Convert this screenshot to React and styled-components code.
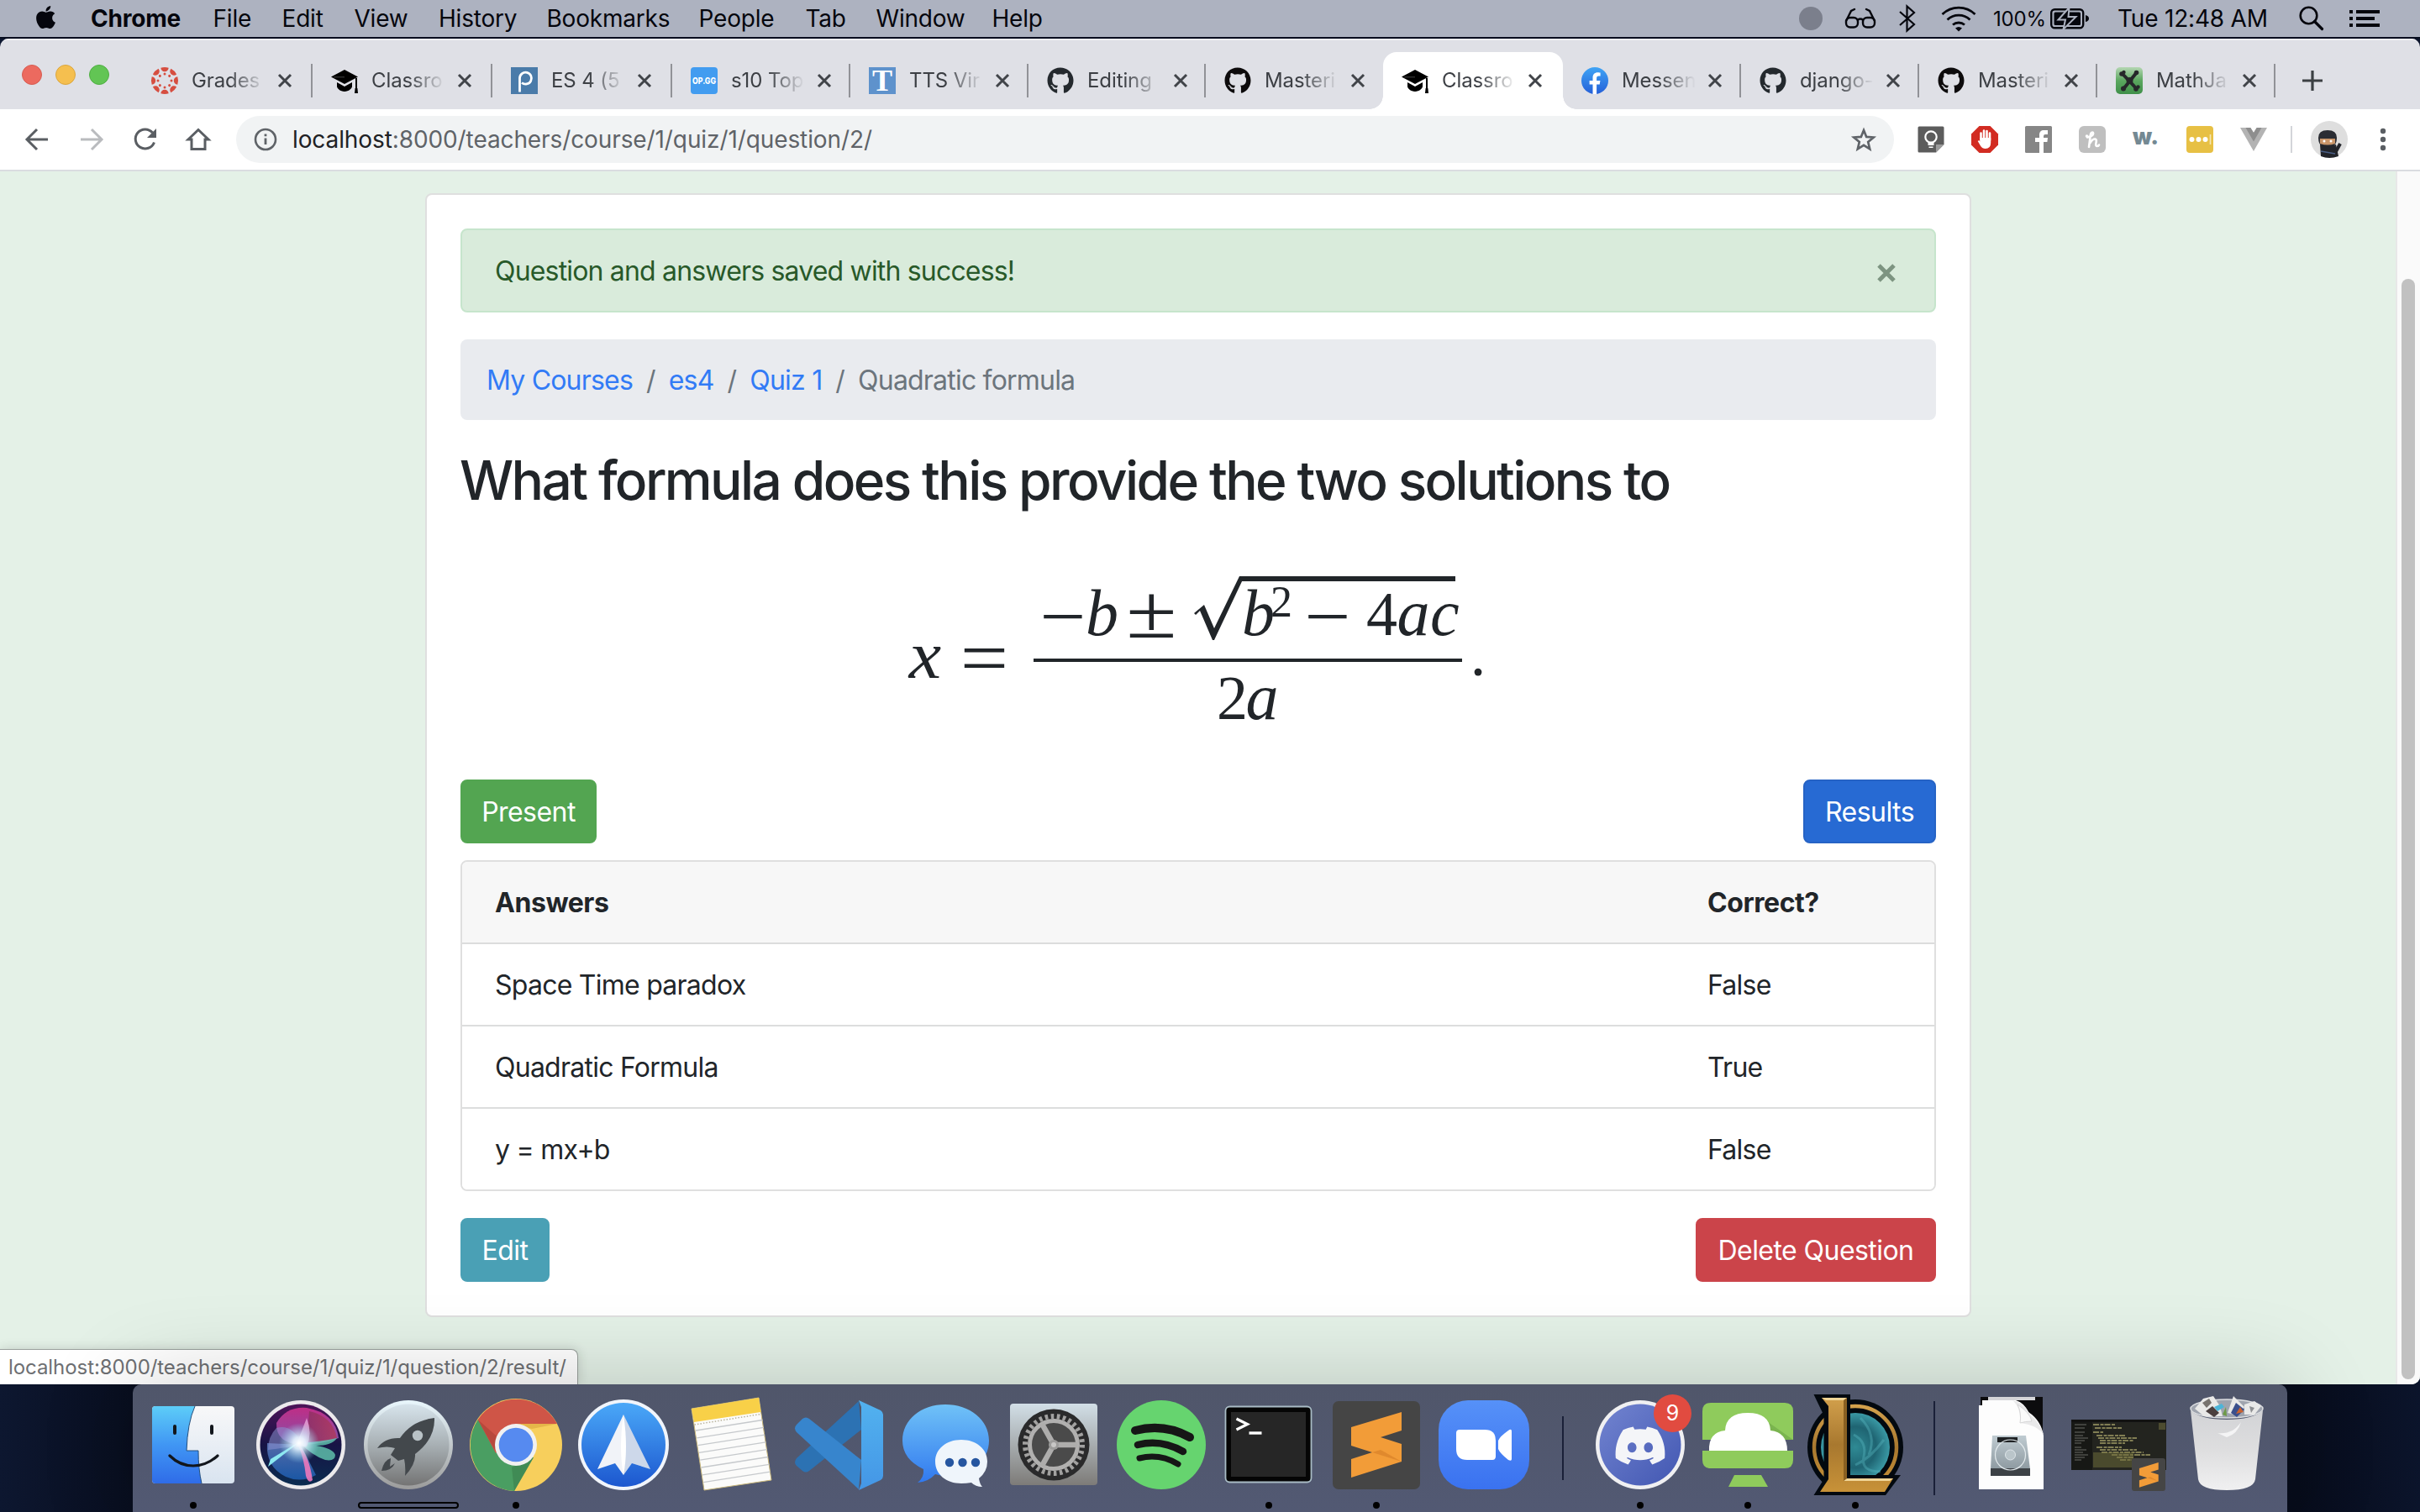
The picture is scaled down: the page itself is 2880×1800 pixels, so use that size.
import React from "react";
import styled, { createGlobalStyle, css } from "styled-components";
import { FaApple, FaGithub, FaDiscord } from "react-icons/fa";

const GlobalStyle = createGlobalStyle`
  *, *::before, *::after { box-sizing: border-box; }
  html, body { margin: 0; padding: 0; background: #0b1226; }
  body {
    width: 2880px;
    height: 1800px;
    overflow: hidden;
    font-family: Inter, "Liberation Sans", sans-serif;
    color: #212529;
  }
  svg { display: block; flex: none; overflow: visible; }
`;

const Desktop = styled.div`
  width: 2880px;
  height: 1800px;
  display: flex;
  flex-direction: column;
  background: linear-gradient(90deg, #0d1730 0%, #080d1d 6%, #0b1226 50%, #070c1b 95%, #0b142b 100%);
`;

/* ---------- menu bar ---------- */

const MenuBar = styled.header`
  height: 46px;
  flex: none;
  display: flex;
  align-items: center;
  justify-content: space-between;
  padding: 0 48px 0 39px;
  background: #adb2c0;
  border-bottom: 2px solid #060c1f;
  color: #05060d;
  font-size: 28px;
`;

const MenuGroup = styled.div`
  display: flex;
  align-items: center;
  height: 44px;
`;

const MenuItem = styled.span`
  width: ${(p) => p.$w}px;
  white-space: nowrap;
  letter-spacing: ${(p) => p.$ls || "-0.2px"};
  font-weight: ${(p) => (p.$bold ? 700 : 400)};
`;

const BatteryLabel = styled.span`
  width: 68px;
  font-size: 24px;
  letter-spacing: -0.2px;
`;

const Slot = styled.span`
  display: flex;
  align-items: center;
  width: ${(p) => p.$w}px;
  flex: none;
`;

const AppleSlot = styled(Slot)`
  font-size: 31px;
  padding-bottom: 4px;
`;

const RecordDot = styled.span`
  width: 28px;
  height: 28px;
  border-radius: 50%;
  background: #7b7f8c;
`;

/* ---------- browser window ---------- */

const Window = styled.div`
  height: 1602px;
  flex: none;
  display: flex;
  flex-direction: column;
  border-radius: 10px 10px 10px 0;
  overflow: hidden;
  background: #dfe0e6;
`;

const TabStrip = styled.nav`
  height: 84px;
  flex: none;
  display: flex;
  align-items: flex-end;
  padding-left: 26px;
  border-top: 2px solid #eeeef1;
`;

const Lights = styled.div`
  display: flex;
  gap: 16px;
  width: 132px;
  height: 68px;
  padding-top: 15px;
`;

const Light = styled.span`
  width: 24px;
  height: 24px;
  border-radius: 50%;
  background: ${(p) => p.$c};
  border: 1px solid ${(p) => p.$edge};
`;

const Tab = styled.div`
  width: ${(p) => p.$w}px;
  height: 68px;
  flex: none;
  display: flex;
  align-items: center;
  padding: 0 0 0 22px;
  position: relative;
  ${(p) =>
    p.$active &&
    css`
      background: #fff;
      border-radius: 16px 16px 0 0;
      &::before,
      &::after {
        content: "";
        position: absolute;
        bottom: 0;
        width: 16px;
        height: 16px;
      }
      &::before {
        left: -16px;
        background: radial-gradient(circle at 0 0, transparent 15.5px, #fff 16px);
      }
      &::after {
        right: -16px;
        background: radial-gradient(circle at 100% 0, transparent 15.5px, #fff 16px);
      }
    `}
`;

const TabTitle = styled.span`
  width: 88px;
  margin-left: 16px;
  overflow: hidden;
  white-space: nowrap;
  font-size: 24px;
  line-height: 32px;
  letter-spacing: -0.1px;
  color: #3c3f44;
  -webkit-mask-image: linear-gradient(90deg, #000 50%, transparent 100%);
  mask-image: linear-gradient(90deg, #000 50%, transparent 100%);
`;

const TabClose = styled.svg`
  margin-left: 14px;
`;

const TabRule = styled.span`
  width: 2px;
  height: 40px;
  margin-left: auto;
  background: ${(p) => (p.$hidden ? "transparent" : "#919297")};
`;

const NewTab = styled.div`
  height: 68px;
  display: flex;
  align-items: center;
  padding-left: 32px;
`;

const Toolbar = styled.div`
  height: 74px;
  flex: none;
  display: flex;
  align-items: center;
  background: #fff;
  border-bottom: 2px solid #dadce0;
  padding-left: 30px;
`;

const Omnibox = styled.div`
  width: 1973px;
  height: 56px;
  border-radius: 28px;
  background: #f1f3f4;
  display: flex;
  align-items: center;
  padding: 0 21px 0 21px;
`;

const Url = styled.span`
  flex: 1;
  margin-left: 18px;
  font-size: 28px;
  letter-spacing: -0.1px;
  color: #5f6368;
  white-space: nowrap;
  b {
    font-weight: 400;
    color: #202124;
  }
`;

const Extensions = styled.div`
  display: flex;
  align-items: center;
  gap: 32px;
  margin-left: 28px;
`;

const Extension = styled.span`
  width: 32px;
  height: 32px;
  display: flex;
  align-items: center;
  justify-content: center;
`;

const ToolbarRule = styled.span`
  width: 2px;
  height: 32px;
  margin: 0 22px 0 28px;
  background: #d3d5d9;
`;

const Viewport = styled.div`
  flex: 1;
  display: flex;
  position: relative;
  background: #e4f1e7;
`;

const Page = styled.main`
  flex: 1;
  padding: 26px 0 0 506px;
`;

const ScrollTrack = styled.div`
  width: 29px;
  background: #fafafa;
  border-left: 2px solid #e8e8e8;
  padding: 128px 6px 6px 5px;
`;

const ScrollThumb = styled.div`
  width: 16px;
  height: 1310px;
  border-radius: 8px;
  background: #c1c1c1;
`;

const StatusBubble = styled.div`
  position: absolute;
  left: 0;
  bottom: 0;
  width: 688px;
  height: 42px;
  padding-left: 10px;
  line-height: 42px;
  font-size: 24px;
  letter-spacing: -0.07px;
  color: #6e7073;
  white-space: nowrap;
  background: #fff;
  border: 1px solid #9aa19d;
  border-left: 0;
  border-bottom: 0;
  border-radius: 0 8px 0 0;
  box-shadow: 0 0 14px rgba(0, 0, 0, 0.16);
`;

/* ---------- page content ---------- */

const Card = styled.section`
  width: 1840px;
  height: 1338px;
  padding: 40px;
  background: #fff;
  border: 2px solid #dfdfdf;
  border-radius: 8px;
`;

const Alert = styled.div`
  height: 100px;
  display: flex;
  align-items: center;
  justify-content: space-between;
  padding: 0 46px 0 39px;
  margin-bottom: 32px;
  border: 2px solid #c6e5cc;
  border-radius: 8px;
  background: #d9ebdb;
  color: #285929;
  font-size: 32px;
  letter-spacing: -0.82px;
`;

const AlertClose = styled.svg`
  margin-top: 6px;
`;

const Breadcrumb = styled.nav`
  height: 96px;
  display: flex;
  align-items: center;
  padding: 0 31px;
  margin-bottom: 32px;
  border-radius: 8px;
  background: #e9ebef;
  color: #6c757d;
  font-size: 32px;
  letter-spacing: -0.8px;
`;

const Crumb = styled.span`
  color: ${(p) => (p.$link ? "#327bf6" : "#6c757d")};
  &:not(:first-child)::before {
    content: "/";
    color: #6c757d;
    padding: 0 16px;
  }
`;

const Heading = styled.h1`
  margin: 0;
  height: 77px;
  font-size: 64px;
  line-height: 79px;
  font-weight: 500;
  letter-spacing: -2.6px;
  word-spacing: 0;
  text-indent: -1px;
  white-space: nowrap;
`;

const ButtonRow = styled.div`
  display: flex;
  justify-content: space-between;
  margin-bottom: ${(p) => p.$gap || 0}px;
`;

const Button = styled.button`
  width: ${(p) => p.$w}px;
  height: 76px;
  padding: 0;
  border: 2px solid ${(p) => p.$edge || p.$c};
  border-radius: 8px;
  background: ${(p) => p.$c};
  color: #fff;
  font-family: inherit;
  font-size: 32px;
  letter-spacing: -0.55px;
`;

const AnswerTable = styled.div`
  margin-bottom: 32px;
  border: 2px solid #dfdfdf;
  border-radius: 8px;
  overflow: hidden;
`;

const AnswerRow = styled.div`
  height: ${(p) => (p.$last ? 96 : 98)}px;
  display: grid;
  grid-template-columns: 1443px 1fr;
  align-items: center;
  padding: 0 39px;
  font-size: 32px;
  letter-spacing: ${(p) => (p.$head ? "-0.45px" : "-0.75px")};
  font-weight: ${(p) => (p.$head ? 700 : 400)};
  background: ${(p) => (p.$head ? "#f7f7f7" : "#fff")};
  border-bottom: ${(p) => (p.$last ? "0" : "2px solid #dcdddd")};
`;

/* ---------- formula ---------- */

const Formula = styled.div`
  height: 319px;
  padding: 75px 0 0 535px;
  display: flex;
  align-items: flex-start;
  font-family: "Liberation Serif", "Times New Roman", serif;
  font-size: 74px;
`;

const MathLine = styled.span`
  display: block;
  white-space: nowrap;
  line-height: ${(p) => p.$lh}px;
  ${(p) => p.$ml && `margin-left: ${p.$ml}px;`}
`;

const Glyph = styled.span`
  display: inline-block;
  width: ${(p) => p.$w}px;
  line-height: 0;
  text-align: center;
  font-size: ${(p) => p.$size || 74}px;
  font-style: ${(p) => (p.$it ? "italic" : "normal")};
  vertical-align: ${(p) => p.$raise || 0}px;
  ${(p) => p.$stretch && `transform: scaleX(${p.$stretch});`}
`;

const Fraction = styled.span`
  display: flex;
  flex-direction: column;
  width: 510px;
  margin-left: 25px;
`;

const Numerator = styled.span`
  height: 104px;
  display: flex;
  align-items: flex-start;
  padding-left: 8px;
  border-bottom: 4px solid #212529;
`;

const Radicand = styled.span`
  width: 254px;
  margin-top: 2px;
  border-top: 6px solid #212529;
`;

const Denominator = styled.span`
  padding-left: 218px;
`;

/* ---------- dock ---------- */

const DockArea = styled.footer`
  flex: 1;
  padding-left: 158px;
  display: flex;
`;

const Dock = styled.div`
  width: 2564px;
  height: 152px;
  padding-left: 8px;
  display: flex;
  position: relative;
  border-radius: 10px 10px 0 0;
  background: linear-gradient(180deg, #50566a 0%, #525973 100%);
  box-shadow: 0 0 110px rgba(0, 0, 0, 0.2);
`;

const DockCell = styled.div`
  width: 128px;
  height: 152px;
  position: relative;
  ${(p) =>
    p.$running &&
    css`
      &::after {
        content: "";
        position: absolute;
        left: 60px;
        bottom: 4px;
        width: 8px;
        height: 8px;
        border-radius: 50%;
        background: #000;
      }
    `}
  ${(p) =>
    p.$launching &&
    css`
      &::after {
        content: "";
        position: absolute;
        left: 4px;
        bottom: 4px;
        width: 120px;
        height: 8px;
        border-radius: 4px;
        border: 2px solid #000;
      }
    `}
`;

const DockRule = styled.div`
  width: ${(p) => p.$w}px;
  display: flex;
  justify-content: center;
  padding-top: ${(p) => p.$top}px;
  &::before {
    content: "";
    width: 2px;
    height: ${(p) => p.$h}px;
    margin-left: 2px;
    background: #1a2038;
  }
`;

const Badge = styled.span`
  position: absolute;
  left: 80px;
  top: 12px;
  width: 45px;
  height: 45px;
  border-radius: 50%;
  background: #e14b40;
  color: #fff;
  font-size: 25px;
  line-height: 45px;
  text-align: center;
`;

const DiscordGlyph = styled(FaDiscord)`
  position: absolute;
  left: 32px;
  top: 41px;
  color: #f4f5f8;
`;

/* ---------- small drawings ---------- */

const Cap = () => (
  <svg width="32" height="32" viewBox="0 0 32 32">
    <path d="M16 3 32 11.5 16 20 0 11.5z" fill="#000" />
    <path d="M7 18v5c0 2 4 6 9 6s9-4 9-6v-5l-9 5z" fill="#000" />
    <path d="M30 13v13" stroke="#000" strokeWidth="2" />
    <path d="M28.6 25h2.8l.6 6h-4z" fill="#000" />
    <path d="m3 11.8 13 0" stroke="#555" strokeWidth=".8" />
  </svg>
);

const CanvasIcon = () => (
  <svg width="32" height="32" viewBox="0 0 32 32" fill="#d64e40">
    {[0, 45, 90, 135, 180, 225, 270, 315].map((a) => (
      <g key={a} transform={`rotate(${a} 16 16)`}>
        <path d="M11.300 .7a16 16 0 0 1 9.400 0c-.2 2.700-2.200 4.500-4.700 4.500s-4.500-1.800-4.700-4.500z" />
        <circle cx="16" cy="8" r="1.500" />
      </g>
    ))}
  </svg>
);

const PiazzaIcon = () => (
  <svg width="32" height="32" viewBox="0 0 32 32">
    <rect width="32" height="32" fill="#4a7ba9" />
    <path d="M10.500 29.500V13a7 7 0 1 1 2.500 5.500" fill="none" stroke="#fff" strokeWidth="2.800" />
  </svg>
);

const OpggIcon = () => (
  <svg width="32" height="32" viewBox="0 0 32 32">
    <rect width="32" height="32" rx="4" fill="#429cf0" />
    <text x="2" y="19.500" fontSize="10" fontWeight="800" textLength="28" lengthAdjust="spacingAndGlyphs" fill="#fff" fontFamily="Inter, sans-serif">
      OP.GG
    </text>
  </svg>
);

const TIcon = () => (
  <svg width="32" height="32" viewBox="0 0 32 32">
    <rect width="32" height="32" fill="#5e92cc" />
    <text x="16" y="28" textAnchor="middle" fontSize="36" fontWeight="700" fill="#fff" fontFamily="Liberation Serif, serif">
      T
    </text>
  </svg>
);

const FacebookIcon = () => (
  <svg width="32" height="32" viewBox="0 0 32 32">
    <defs>
      <linearGradient id="fb" x1="0" y1="0" x2="0" y2="1">
        <stop offset="0" stopColor="#3fa4f5" />
        <stop offset="1" stopColor="#2560d8" />
      </linearGradient>
    </defs>
    <circle cx="16" cy="16" r="16" fill="url(#fb)" />
    <path d="M13.500 32V20.600H9.600V16h3.900v-3.500c0-4 2.300-6.200 5.900-6.200 1.700 0 3.200.3 3.200.3v3.900h-2c-2 0-2.500 1.200-2.500 2.500v3h4.300l-.7 4.600h-3.600V32z" fill="#fff" />
  </svg>
);

const MathJaxIcon = () => (
  <svg width="32" height="32" viewBox="0 0 32 32">
    <defs>
      <linearGradient id="mj" x1="0" y1="0" x2="0" y2="1">
        <stop offset="0" stopColor="#b4d6b2" />
        <stop offset=".5" stopColor="#5ba75f" />
        <stop offset="1" stopColor="#3f8f49" />
      </linearGradient>
    </defs>
    <rect width="32" height="32" rx="5" fill="url(#mj)" />
    <path d="M8 8 24 25M25 6 9 26" stroke="#26282a" strokeWidth="4" strokeLinecap="round" />
    <g fill="#26282a">
      <circle cx="7" cy="8" r="2.800" />
      <circle cx="9.500" cy="6" r="2.200" />
      <circle cx="24.500" cy="6.500" r="2.800" />
      <circle cx="24" cy="26" r="2.800" />
      <circle cx="26.500" cy="23.500" r="2.200" />
      <circle cx="9" cy="25.500" r="3" />
      <circle cx="16.500" cy="16" r="4" />
    </g>
  </svg>
);

const Cross = () => (
  <TabClose width="18" height="18" viewBox="0 0 18 18">
    <path d="m2 2 14 14M16 2 2 16" stroke="#414449" strokeWidth="3" />
  </TabClose>
);

const GlassesIcon = () => (
  <svg width="38" height="26" viewBox="0 0 38 26" fill="none" stroke="#05060d" strokeWidth="2.400">
    <rect x="2" y="12" width="14" height="11.500" rx="5" />
    <rect x="22" y="12" width="14" height="11.500" rx="5" />
    <path d="M16 14.500q3-2 6 0M2.500 15 8 4l4-2M35.500 15 30 4l-4-2" strokeLinecap="round" />
  </svg>
);

const BluetoothIcon = () => (
  <svg width="20" height="34" viewBox="0 0 20 34" fill="none" stroke="#05060d" strokeWidth="2.200">
    <path d="m1 9 17 15-8.500 7.500V2.500L18 10 1 25" />
  </svg>
);

const WifiIcon = () => (
  <svg width="42" height="32" viewBox="0 0 42 32" fill="none" stroke="#05060d" strokeWidth="2.800">
    <path d="M1.500 11a28 28 0 0 1 39 0M7.500 17.500a19.500 19.500 0 0 1 27 0M14 23.500a11 11 0 0 1 14 0" />
    <path d="M17 27.500q4-3 8 0l-4 4z" fill="#05060d" stroke="none" />
  </svg>
);

const BatteryIcon = () => (
  <svg width="46" height="26" viewBox="0 0 46 26">
    <rect x="1.200" y="2.200" width="38" height="22" rx="4" fill="none" stroke="#05060d" strokeWidth="2.400" />
    <rect x="4.500" y="5.500" width="31.500" height="15.500" rx="1.500" fill="#05060d" />
    <path d="M42 9v8q4-1 4-4t-4-4z" fill="#05060d" />
    <path d="M22.500 0 9.500 14.500h8.500L15.500 26l15-15h-9z" fill="#05060d" stroke="#adb2c0" strokeWidth="2" />
  </svg>
);

const SpotlightIcon = () => (
  <svg width="30" height="30" viewBox="0 0 30 30" fill="none" stroke="#05060d">
    <circle cx="11.500" cy="11.500" r="9.800" strokeWidth="2.600" />
    <path d="m18.500 18.500 9 9" strokeWidth="3.200" strokeLinecap="round" />
  </svg>
);

const ListIcon = () => (
  <svg width="36" height="22" viewBox="0 0 36 22" fill="#05060d">
    <path d="M0 1h4v4H0zM8 1h28v4H8zM0 9h4v4H0zM8 9h22v4H8zM0 17h4v4H0zM8 17h28v4H8z" />
  </svg>
);

const BackIcon = ({ color = "#5a5e63", flip }) => (
  <svg width="28" height="28" viewBox="0 0 28 28" fill="none" stroke={color} strokeWidth="3">
    <path d={flip ? "M1 14h24M14 2l12 12-12 12" : "M27 14H3M14 2 2 14l12 12"} />
  </svg>
);

const ReloadIcon = () => (
  <svg width="28" height="28" viewBox="0 0 28 28">
    <path d="M24.500 17.500A11.500 11.500 0 1 1 22.500 6" fill="none" stroke="#5a5e63" strokeWidth="3" />
    <path d="M27 1v11H16z" fill="#5a5e63" />
  </svg>
);

const HomeIcon = () => (
  <svg width="28" height="28" viewBox="0 0 28 28" fill="none" stroke="#5a5e63" strokeWidth="3">
    <path d="M2 14 14 2.500 26 14h-4v11.500H6V14z" strokeLinejoin="miter" />
  </svg>
);

const InfoIcon = () => (
  <svg width="28" height="28" viewBox="0 0 28 28" fill="none" stroke="#5f6368" strokeWidth="2.600">
    <circle cx="14" cy="14" r="12" />
    <path d="M14 12.500V20M14 7.500v2.800" strokeWidth="2.800" />
  </svg>
);

const StarIcon = () => (
  <svg width="30" height="30" viewBox="0 0 30 30" fill="none" stroke="#5f6368" strokeWidth="2.700">
    <path d="m15 4 3.200 7.900 8.500.6-6.500 5.500 2 8.300-7.200-4.500-7.200 4.500 2-8.300-6.500-5.500 8.500-.6z" />
  </svg>
);

const KeepIcon = () => (
  <svg width="32" height="32" viewBox="0 0 32 32">
    <path d="M2 .5h28q1.500 0 1.500 1.500v20L22 31.500H2Q.5 31.500.5 30V2Q.5.5 2 .5z" fill="#5c5c5c" />
    <path d="M31.500 22H22v9.500z" fill="#9c9c9c" />
    <circle cx="16" cy="13" r="6.700" fill="none" stroke="#fff" strokeWidth="2.200" />
    <path d="M12.500 19h7v4h-7zM13.500 24.500h5V26h-5z" fill="#fff" />
  </svg>
);

const BlockIcon = () => (
  <svg width="32" height="32" viewBox="0 0 32 32">
    <path d="M9.500 0h13L32 9.500v13L22.500 32h-13L0 22.500v-13z" fill="#d22c22" />
    <path d="M11.500 17V8.500M15 16V5.500M18.500 16V6M22 17V8.500" stroke="#fff" strokeWidth="2.600" strokeLinecap="round" />
    <path d="M10.200 14h13v6q0 7-6.500 7-3.500 0-5.500-3l-3.500-6q1.500-1.500 3 .5z" fill="#fff" />
  </svg>
);

const GreyFacebook = () => (
  <svg width="32" height="32" viewBox="0 0 32 32">
    <rect width="32" height="32" rx="1.500" fill="#868686" />
    <path d="M17 32V19h-5v-5h5v-3.500C17 7 19 5 22.500 5H27v5h-3q-2 0-2 2v2h5l-.6 5H22v13z" fill="#fff" />
  </svg>
);

const HoneyIcon = () => (
  <svg width="32" height="32" viewBox="0 0 32 32">
    <rect width="32" height="32" rx="6" fill="#bfbfbf" />
    <path d="M10 13.500q6-1 7-4 .4-2-1-2t-2 2L12 25M13.500 20q3-5 6-4.500 2 .5 1 4.500t1.500 4q1.500 0 2-1.500" fill="none" stroke="#fff" strokeWidth="2.600" strokeLinecap="round" />
    <circle cx="9.500" cy="12" r="1.800" fill="#fff" />
  </svg>
);

const WikiIcon = () => (
  <svg width="32" height="32" viewBox="0 0 32 32">
    <text x="0" y="22" fontSize="27" fontWeight="900" textLength="31" lengthAdjust="spacingAndGlyphs" fill="#748993" fontFamily="Inter, sans-serif">
      w.
    </text>
  </svg>
);

const PasswordIcon = () => (
  <svg width="32" height="32" viewBox="0 0 32 32">
    <rect width="32" height="32" rx="4" fill="#e7c044" />
    <circle cx="6.500" cy="16" r="3" fill="#fff" />
    <circle cx="14.500" cy="16" r="3" fill="#fff" />
    <circle cx="22.500" cy="16" r="3" fill="#fff" />
    <path d="M28.500 10v12" stroke="#f6e6b4" strokeWidth="1.600" />
  </svg>
);

const VueIcon = () => (
  <svg width="32" height="32" viewBox="0 0 32 32">
    <path d="M0 2h12.300L16 8l3.700-6H32L16 30z" fill="#b3b3b3" />
    <path d="M6.500 2h5.800L16 8l3.700-6h5.800L16 18.500z" fill="#8e8e8e" />
  </svg>
);

const NinjaAvatar = () => (
  <svg width="44" height="44" viewBox="0 0 44 44">
    <circle cx="22" cy="22" r="22" fill="#dedede" />
    <path d="M9 20q0-9 11-9t11 9q0 8-5 10H14q-5-2-5-10z" fill="#2b2d33" />
    <path d="M11 21h18v6q-9 3-18 0z" fill="#c99569" />
    <circle cx="16" cy="24" r="1.500" fill="#fff" />
    <circle cx="24" cy="24" r="1.500" fill="#fff" />
    <path d="M11 28q10 3 19 0l3 14q-11 4-21 0z" fill="#22242a" />
    <path d="m28 40 7-13" stroke="#22242a" strokeWidth="4" />
    <path d="m12 36 17 3" stroke="#4a5f86" strokeWidth="1.600" />
  </svg>
);

const DotsIcon = () => (
  <svg width="8" height="28" viewBox="0 0 8 28" fill="#5a5e63">
    <circle cx="4" cy="4" r="3.200" />
    <circle cx="4" cy="14" r="3.200" />
    <circle cx="4" cy="24" r="3.200" />
  </svg>
);

/* ---------- dock drawings ---------- */

const Art = ({ children }) => (
  <svg width="128" height="152" viewBox="0 0 128 152">
    {children}
  </svg>
);

const Grad = ({ id, from, to, mid, x2 = 0, y2 = 1 }) => (
  <linearGradient id={id} x1="0" y1="0" x2={x2} y2={y2}>
    <stop offset="0" stopColor={from} />
    {mid && <stop offset=".5" stopColor={mid} />}
    <stop offset="1" stopColor={to} />
  </linearGradient>
);

const Finder = () => (
  <Art>
    <Grad id="fi1" from="#5dcdf8" mid="#4096f4" to="#2f6ce8" />
    <Grad id="fi2" from="#f8f8f9" to="#d9e4f0" />
    <rect x="15" y="26" width="98" height="92" rx="4" fill="url(#fi2)" />
    <path d="M19 26h47q-9 20-10 53h14q0 22 4 39H19q-4 0-4-4V30q0-4 4-4z" fill="url(#fi1)" />
    <path d="M66 26q-9 20-10 53h14q0 22 4 39" fill="none" stroke="#24507e" strokeWidth="1" />
    <path d="M42 50v8M86 50v8" stroke="#12161c" strokeWidth="4" strokeLinecap="round" />
    <path d="M36 85q12 12 28 12t29-12" fill="none" stroke="#12161c" strokeWidth="3.200" strokeLinecap="round" />
  </Art>
);

const Siri = () => (
  <Art>
    <defs>
      <Grad id="si0" from="#4d1458" mid="#171445" to="#0b2c50" />
      <radialGradient id="si1">
        <stop offset="0" stopColor="#fff" />
        <stop offset=".3" stopColor="#e6f6ff" stopOpacity=".9" />
        <stop offset="1" stopColor="#8fd8f0" stopOpacity="0" />
      </radialGradient>
      <Grad id="si2" from="#c9308a" to="#8a58b4" />
      <Grad id="si3" from="#5a74b4" to="#1c5cae" />
      <Grad id="si4" from="#8a2f62" to="#b03a58" x2={1} y2={0} />
    </defs>
    <circle cx="64" cy="72" r="53" fill="#eceaec" />
    <circle cx="64" cy="72" r="48.500" fill="url(#si0)" />
    <path d="M24 70q-2 28 22 40 18 8 36-2L64 72z" fill="url(#si3)" opacity=".9" />
    <path d="M35 46q12-20 36-18 34 6 38 36-22 8-45 8-30-2-29-26z" fill="url(#si2)" opacity=".92" />
    <path d="M74 32q28 6 33 32-20 6-36 4z" fill="url(#si4)" opacity=".8" />
    <path d="M35 52q18-6 32 20-26 4-42 6 0-16 10-26z" fill="#8b8fd0" opacity=".55" />
    <path d="M64 70q24-2 43-6-6 9-25 9 20 3 23 11 0 8-12 6Q76 84 64 70z" fill="#63c8b0" opacity=".8" />
    <path d="M62 72q12 14 16 42-5 5-8-5-2-20-9-36z" fill="#ee78bb" opacity=".9" />
    <path d="M66 66 25 98l3-9z" fill="#8ff0f4" opacity=".95" />
    <path d="m58 74 13-34q7 18 0 34z" fill="#e9a8d8" opacity=".8" />
    <circle cx="62" cy="70" r="24" fill="url(#si1)" />
  </Art>
);

const Launchpad = () => (
  <Art>
    <Grad id="la1" from="#d7e4ec" mid="#a8b0b4" to="#747474" />
    <Grad id="la2" from="#e9f7fd" to="#9b9b9b" />
    <circle cx="64" cy="72" r="53" fill="url(#la2)" />
    <circle cx="64" cy="72" r="48.500" fill="url(#la1)" />
    <path d="M95 40q1 25-23 43 1 12-12 26 1-11-1-20l-7 2-9-7 5-8q-9-3-21 0 9-13 27-12 14-21 41-24z" fill="#43484c" />
    <path d="M43 88q-8 2-11 15 12 0 16-9l-6 4z" fill="#43484c" />
    <circle cx="75" cy="61" r="6.200" fill="#b9c2c6" />
  </Art>
);

const Chrome = () => (
  <Art>
    <circle cx="64" cy="72" r="55" fill="#f7cf5c" />
    <path d="M18.700 42A55 55 0 0 0 62 127l23-40-30-5z" fill="#4a9e62" />
    <path d="M18.700 42A55 55 0 0 1 113 47H64L40 82z" fill="#cf5547" />
    <path d="m18.700 42 20 36 6-13z" fill="#a93f35" opacity=".6" />
    <path d="M64 47h49l-30 6z" fill="#d9a53c" opacity=".6" />
    <path d="m85 87-23 40-3-28z" fill="#3a7f4d" opacity=".6" />
    <circle cx="64" cy="72" r="25" fill="#f1f1f1" />
    <circle cx="64" cy="72" r="20.300" fill="#568af0" />
  </Art>
);

const Spark = () => (
  <Art>
    <Grad id="sp1" from="#4aa8f8" to="#1c57cf" />
    <circle cx="64" cy="72" r="54" fill="#f1f5fb" />
    <circle cx="64" cy="72" r="50" fill="url(#sp1)" />
    <path d="M64 36 33 101l21-7 10 14z" fill="#f1f3f8" />
    <path d="m64 36 32 65-22-7-10 14z" fill="#cdd8ea" />
    <path d="M64 36q-6 40 0 72 6-32 0-72z" fill="#fff" />
  </Art>
);

const Notes = () => (
  <Art>
    <path d="m17 29 80-13 15 98-80 12z" fill="#fbfbfa" stroke="#c9b77a" strokeWidth="1" />
    <path d="m17 29 80-13 2.500 17L20 45z" fill="#f8d048" />
    <path d="m20.500 48 79-12.500" stroke="#b9b39d" strokeWidth="1.500" strokeDasharray="1.500 2" />
    <g stroke="#c6c9cc" strokeWidth="1.300">
      {[0, 1, 2, 3, 4, 5, 6, 7].map((i) => (
        <path key={i} d={`M${22 + i * 1.3} ${55 + i * 8.8}l79.500-12.500`} />
      ))}
    </g>
  </Art>
);

const VSCode = () => (
  <Art>
    <Grad id="vs1" from="#52b2ef" to="#4496e6" />
    <path d="M88 20 14 88q-4 5 0 9l7 6q4 3 8 0l62-49z" fill="#2c72b3" />
    <path d="M88 125 14 57q-4-5 0-9l7-7q4-3 8 0l62 49z" fill="#3785cd" />
    <path d="m88 19 26 12q3 2 3 5v73q0 3-3 5l-26 12 3-8V27z" fill="url(#vs1)" />
  </Art>
);

const Messages = () => (
  <Art>
    <Grad id="me1" from="#70c2f7" to="#3179ef" />
    <path d="M63 24c29 0 52 18 52 43s-23 43-50 42q-8 0-14-2-8 9-21 10 8-6 7-16-25-12-25-34c0-25 22-43 51-43z" fill="url(#me1)" />
    <path d="M82 66c18 0 31 11 31 26q0 12-10 20 1 7 4 10-8 0-13-5-6 1-12 1c-18 0-31-11-31-26s13-26 31-26z" fill="#eff5fb" />
    <circle cx="68" cy="93" r="5.200" fill="#2656a0" />
    <circle cx="83.500" cy="93" r="5.200" fill="#2656a0" />
    <circle cx="99" cy="93" r="5.200" fill="#2656a0" />
  </Art>
);

const Settings = () => (
  <Art>
    <Grad id="se1" from="#d2dfe7" to="#7d7b78" />
    <rect x="12" y="23" width="104" height="97" rx="4" fill="url(#se1)" />
    <circle cx="64" cy="72" r="42.500" fill="#2a2a2b" />
    <circle cx="64" cy="72" r="34" fill="none" stroke="#a2a1a0" strokeWidth="6" strokeDasharray="3.600 3.520" />
    <circle cx="64" cy="72" r="28.500" fill="#4a4a4a" stroke="#b1b0af" strokeWidth="5" />
    <path d="M64 72h28M64 72 50 47M64 72 50 97" stroke="#aeadac" strokeWidth="6.500" />
    <circle cx="64" cy="72" r="6" fill="#9c9b9a" />
    <circle cx="64" cy="72" r="3" fill="#c8c7c6" />
  </Art>
);

const Spotify = () => (
  <Art>
    <circle cx="64" cy="72" r="53" fill="#66d46f" />
    <g fill="none" stroke="#161616" strokeLinecap="round">
      <path d="M33 55q34-9 65 8" strokeWidth="10" />
      <path d="M36 72q28-7 54 8" strokeWidth="8.500" />
      <path d="M38 88q24-6 46 7" strokeWidth="7" />
    </g>
  </Art>
);

const Terminal = () => (
  <Art>
    <rect x="12.500" y="26.500" width="102" height="90" rx="5" fill="#050505" stroke="#a9bcc5" strokeWidth="1.800" />
    <rect x="19" y="33" width="89" height="77" fill="#262626" />
    <path d="m25.500 41 13 6.500-13 6.500" fill="none" stroke="#fff" strokeWidth="3.200" />
    <path d="M40.500 58h15" stroke="#fff" strokeWidth="3.400" />
  </Art>
);

const SublimeS = () => (
  <>
    <path d="m34 51 60-18v22L69 63l25 8v21l-60 19V89l25-8-25-8z" fill="#f29c38" />
    <path d="m59 81 10-3 25 14z" fill="#d9822a" opacity=".7" />
  </>
);

const Sublime = () => (
  <Art>
    <rect x="12" y="20" width="104" height="105" rx="7" fill="#454545" />
    <SublimeS />
  </Art>
);

const Zoom = () => (
  <Art>
    <Grad id="zo1" from="#5691f8" to="#3a72f0" />
    <rect x="10" y="19" width="108" height="106" rx="35" fill="url(#zo1)" />
    <path d="M35 54h30q13 0 13 13v19q0 4-4 4H44q-13 0-13-13V58q0-4 4-4z" fill="#fff" />
    <path d="M81 67q2-5 12-12 4-3 4 1v33q0 3-4 1-10-8-12-13z" fill="#fff" />
  </Art>
);

const Discord = () => (
  <Art>
    <Grad id="di1" from="#7284d0" to="#4257b2" x2={1} />
    <circle cx="64" cy="72" r="53" fill="#f0f0f2" />
    <circle cx="64" cy="72" r="48.500" fill="url(#di1)" />
  </Art>
);

const CloudDesk = () => (
  <Art>
    <path d="M20 22h88q10 0 10 10v34H10V32q0-10 10-10z" fill="#8fcb5c" />
    <path d="m84 42 34 24H86z" fill="#6da546" opacity=".6" />
    <path d="M10 79h108v11q0 10-10 10H20q-10 0-10-10z" fill="#8fcb5c" />
    <path d="M18 79q-1-22 19-24 1-21 27-21t27 21q20 2 20 24z" fill="#fff" />
    <path d="M48 108h32l8 14H41z" fill="#8fcb5c" />
  </Art>
);

const League = () => (
  <Art>
    <defs>
      <Grad id="le1" from="#d2a04c" mid="#a8782f" to="#c89238" />
      <radialGradient id="le2">
        <stop offset="0" stopColor="#2f8a94" />
        <stop offset=".6" stopColor="#1f6472" />
        <stop offset="1" stopColor="#3a99a5" />
      </radialGradient>
    </defs>
    <circle cx="64" cy="75" r="57" fill="#03090f" />
    <circle cx="64" cy="75" r="49" fill="none" stroke="url(#le1)" strokeWidth="4.500" />
    <circle cx="64" cy="75" r="41" fill="url(#le2)" />
    <path d="M62 60q16 8 12 26t20 18M70 40q20 20 10 44M64 96q18-8 34-30" fill="none" stroke="#5fc0c8" strokeWidth="3" opacity=".35" />
    <path d="M14.500 12H58v96h60l-18 24H14.500l12-19V37z" fill="#03090f" />
    <path d="M24 16h30v96h55l-10 16H22l10-15V26z" fill="url(#le1)" />
    <path d="M24 16h30l-3 3H29zM54 112h55l-4 3H50z" fill="#f0d596" />
    <path d="M54 16v96l-4 3V19z" fill="#8a6022" />
  </Art>
);

const DiskImage = () => (
  <Art>
    <Grad id="dk1" from="#bfcbd1" to="#8e9aa1" />
    <rect x="28" y="15" width="74" height="50" fill="#0c0c0e" />
    <rect x="37" y="15" width="56" height="4" fill="#d5d5d8" />
    <path d="M26 25h4v-6h40q10 3 15 14 15 10 18 28v64H26z" fill="#fdfdfd" />
    <path d="M66 19q10 8 9 27 20 2 28 14-4-14-16-24-6-13-21-17z" fill="#e9e9ea" />
    <path d="M72 24q5 10 3 22 6-2 14-2-2-10-17-20z" fill="#fafafa" stroke="#cfcfd1" strokeWidth=".8" />
    <path d="m42 61h40l5 40H40z" fill="url(#dk1)" />
    <rect x="40" y="100" width="47" height="9" fill="#3d4246" />
    <rect x="48" y="63" width="24" height="6" fill="#1f2224" />
    <circle cx="63.500" cy="84" r="18" fill="none" stroke="#e2e9ec" strokeWidth="1.200" />
    <circle cx="63.500" cy="84" r="6" fill="#bac5ca" stroke="#dfe6ea" />
  </Art>
);

const codeLines = [
  [34, 48, 26], [36, 52, 32], [34, 57, 12], [38, 61, 34], [40, 64, 46], [42, 67, 40], [42, 70, 30],
  [38, 75, 30], [42, 78, 44], [44, 81, 50], [56, 84, 46], [62, 87, 20], [66, 90, 14],
];

const EditorShot = () => (
  <Art>
    <rect x="8" y="42" width="113" height="60" fill="#23241f" />
    <rect x="8" y="42" width="113" height="3" fill="#111" />
    <rect x="8" y="45" width="25" height="57" fill="#171815" />
    {codeLines.map(([x, y, w]) => (
      <path key={y} d={`M${x} ${y}h${w}`} stroke="#a09a66" strokeWidth="1.300" strokeDasharray="7 1.500 4 1" />
    ))}
    {codeLines.map(([, y]) => (
      <path key={y} d={`M12 ${y}h${8 + (y % 5) * 2}`} stroke="#6a6b66" strokeWidth="1" />
    ))}
    <rect x="34" y="81" width="48" height="18" fill="#6b6a38" opacity=".55" />
    <rect x="112" y="46" width="8" height="8" fill="#4d4c30" />
    <rect x="80" y="88" width="40" height="39" rx="3" fill="#454545" />
    <g transform="translate(76 80.500) scale(.38)">
      <SublimeS />
    </g>
  </Art>
);

const Trash = () => (
  <Art>
    <Grad id="tr1" from="#d2d3d6" mid="#dededf" to="#f0f0f1" />
    <ellipse cx="65" cy="29" rx="43" ry="11" fill="#9fa4ae" stroke="#dcdee1" strokeWidth="1.500" />
    <path d="m27 29 10-12 12-3 8 12 3 12H38zM66 34l7-20 13 13-8 10zM86 24l12-4 8 6-8 10H86z" fill="#e9e9e8" />
    <path d="m36 22 8-5 3 5-6 6z" fill="#77736f" />
    <path d="m40 32 8-6 8 8-6 5z" fill="#4a3f3f" />
    <path d="m50 27 9-4 3 4-8 5z" fill="#4cb5d9" />
    <path d="m70 34 6-12 10 8-9 9z" fill="#3a4f8c" />
    <path d="m76 35 5-8 4 6z" fill="#c9622f" />
    <path d="m60 36 4-9 1 11z" fill="#6e9a48" />
    <path d="m92 26 6 2-4 6z" fill="#8d8f92" />
    <path d="M22 31q12 11 43 11t43-11l-9 82q-2 13-34 13t-34-13z" fill="url(#tr1)" />
    <path d="M54 58q18 2 28-13-4 14-17 18z" fill="#f4f4f5" />
  </Art>
);

/* ---------- data ---------- */

const menus = [
  ["File", 82], ["Edit", 86], ["View", 100.5], ["History", 128.5], ["Bookmarks", 181],
  ["People", 127], ["Tab", 84], ["Window", 138], ["Help", 70],
];

const Octo = ({ color = "#24292e" }) => <FaGithub size={32} color={color} />;

const tabs = [
  { title: "Grades", icon: <CanvasIcon />, w: 214 },
  { title: "Classro", icon: <Cap />, w: 214 },
  { title: "ES 4 (5", icon: <PiazzaIcon />, w: 214 },
  { title: "s10 Top", icon: <OpggIcon />, w: 212 },
  { title: "TTS Vir", icon: <TIcon />, w: 212 },
  { title: "Editing", icon: <Octo />, w: 211 },
  { title: "Masteri", icon: <Octo color="#0d0b0c" />, w: 211, noRule: true },
  { title: "Classro", icon: <Cap />, w: 214, active: true, noRule: true },
  { title: "Messen", icon: <FacebookIcon />, w: 212 },
  { title: "django-", icon: <Octo />, w: 212 },
  { title: "Masteri", icon: <Octo color="#0d0b0c" />, w: 212 },
  { title: "MathJa", icon: <MathJaxIcon />, w: 212 },
];

const extensions = [KeepIcon, BlockIcon, GreyFacebook, HoneyIcon, WikiIcon, PasswordIcon, VueIcon];

const answers = [
  ["Space Time paradox", "False"],
  ["Quadratic Formula", "True"],
  ["y = mx+b", "False"],
];

export default function App() {
  return (
    <Desktop>
      <GlobalStyle />
      <MenuBar>
        <MenuGroup>
          <AppleSlot $w={69}>
            <FaApple />
          </AppleSlot>
          <MenuItem $w={145.5} $bold $ls="-0.2px">Chrome</MenuItem>
          {menus.map(([label, w]) => (
            <MenuItem key={label} $w={w}>{label}</MenuItem>
          ))}
        </MenuGroup>
        <MenuGroup>
          <Slot $w={54}><RecordDot /></Slot>
          <Slot $w={65}><GlassesIcon /></Slot>
          <Slot $w={50}><BluetoothIcon /></Slot>
          <Slot $w={62}><WifiIcon /></Slot>
          <BatteryLabel>100%</BatteryLabel>
          <Slot $w={80}><BatteryIcon /></Slot>
          <MenuItem $w={216}>Tue 12:48 AM</MenuItem>
          <Slot $w={60}><SpotlightIcon /></Slot>
          <Slot $w={36}><ListIcon /></Slot>
        </MenuGroup>
      </MenuBar>

      <Window>
        <TabStrip>
          <Lights>
            <Light $c="#ec6a5f" $edge="#d65c51" />
            <Light $c="#f5bf4f" $edge="#dba63d" />
            <Light $c="#62c554" $edge="#4fae42" />
          </Lights>
          {tabs.map((t, i) => (
            <Tab key={i} $w={t.w} $active={t.active}>
              {t.icon}
              <TabTitle>{t.title}</TabTitle>
              <Cross />
              <TabRule $hidden={t.noRule} />
            </Tab>
          ))}
          <NewTab>
            <svg width="24" height="24" viewBox="0 0 24 24">
              <path d="M12 0v24M0 12h24" stroke="#3c4043" strokeWidth="3.200" />
            </svg>
          </NewTab>
        </TabStrip>
        <Toolbar>
          <Slot $w={65}><BackIcon /></Slot>
          <Slot $w={64}><BackIcon flip color="#b9bbbe" /></Slot>
          <Slot $w={63}><ReloadIcon /></Slot>
          <Slot $w={59}><HomeIcon /></Slot>
          <Omnibox>
            <InfoIcon />
            <Url><b>localhost</b>:8000/teachers/course/1/quiz/1/question/2/</Url>
            <StarIcon />
          </Omnibox>
          <Extensions>
            {extensions.map((Icon, i) => (
              <Extension key={i}><Icon /></Extension>
            ))}
          </Extensions>
          <ToolbarRule />
          <Slot $w={82}><NinjaAvatar /></Slot>
          <DotsIcon />
        </Toolbar>

        <Viewport>
          <Page>
            <Card>
              <Alert>
                <span>Question and answers saved with success!</span>
                <AlertClose width="22" height="22" viewBox="0 0 22 22">
                  <path d="m2 2 18 18M20 2 2 20" stroke="#7d9481" strokeWidth="5" />
                </AlertClose>
              </Alert>
              <Breadcrumb>
                <Crumb $link>My Courses</Crumb>
                <Crumb $link>es4</Crumb>
                <Crumb $link>Quiz 1</Crumb>
                <Crumb>Quadratic formula</Crumb>
              </Breadcrumb>
              <Heading>What formula does this provide the two solutions to</Heading>
              <Formula>
                <MathLine $lh={196}>
                  <Glyph $it $size={80} $w={36} $stretch={1.08}>x</Glyph>
                </MathLine>
                <MathLine $lh={196} $ml={19}>
                  <Glyph $size={90} $w={67} $raise={-7} $stretch={1.13}>=</Glyph>
                </MathLine>
                <Fraction>
                  <Numerator>
                    <MathLine $lh={94}>
                      <Glyph $size={84} $w={54} $raise={-6} $stretch={1.16}>−</Glyph>
                      <Glyph $it $size={78} $w={36}>b</Glyph>
                      <Glyph $size={90} $w={85} $raise={-3} $stretch={1.22}>±</Glyph>
                    </MathLine>
                    <svg width="65" height="80" viewBox="0 0 65 80">
                      <path d="m8 46 12-10 12 28L62 2l4 0v4L32 78h-2L15 43l-5 5z" fill="#212529" />
                    </svg>
                    <Radicand>
                      <MathLine $lh={78}>
                        <Glyph $it $size={78} $w={34}>b</Glyph>
                        <Glyph $size={52} $w={22} $raise={22}>2</Glyph>
                        <Glyph $size={84} $w={92} $raise={-6} $stretch={1.16}>−</Glyph>
                        <Glyph $w={36}>4</Glyph>
                        <Glyph $it $size={78} $w={40}>a</Glyph>
                        <Glyph $it $size={78} $w={30}>c</Glyph>
                      </MathLine>
                    </Radicand>
                  </Numerator>
                  <Denominator>
                    <MathLine $lh={86}>
                      <Glyph $w={34}>2</Glyph>
                      <Glyph $it $size={78} $w={40}>a</Glyph>
                    </MathLine>
                  </Denominator>
                </Fraction>
                <MathLine $lh={190} $ml={9}>
                  <Glyph $w={20}>.</Glyph>
                </MathLine>
              </Formula>
              <ButtonRow $gap={20}>
                <Button $c="#53a551" $w={162}>Present</Button>
                <Button $c="#276ad3" $edge="#2663c5" $w={158}>Results</Button>
              </ButtonRow>
              <AnswerTable>
                <AnswerRow $head>
                  <span>Answers</span>
                  <span>Correct?</span>
                </AnswerRow>
                {answers.map(([text, correct], i) => (
                  <AnswerRow key={text} $last={i === answers.length - 1}>
                    <span>{text}</span>
                    <span>{correct}</span>
                  </AnswerRow>
                ))}
              </AnswerTable>
              <ButtonRow>
                <Button $c="#4aa0b5" $w={106}>Edit</Button>
                <Button $c="#cb444a" $w={286}>Delete Question</Button>
              </ButtonRow>
            </Card>
          </Page>
          <ScrollTrack>
            <ScrollThumb />
          </ScrollTrack>
          <StatusBubble>localhost:8000/teachers/course/1/quiz/1/question/2/result/</StatusBubble>
        </Viewport>
      </Window>

      <DockArea>
        <Dock>
          <DockCell $running><Finder /></DockCell>
          <DockCell><Siri /></DockCell>
          <DockCell $launching><Launchpad /></DockCell>
          <DockCell $running><Chrome /></DockCell>
          <DockCell><Spark /></DockCell>
          <DockCell><Notes /></DockCell>
          <DockCell><VSCode /></DockCell>
          <DockCell><Messages /></DockCell>
          <DockCell><Settings /></DockCell>
          <DockCell><Spotify /></DockCell>
          <DockCell $running><Terminal /></DockCell>
          <DockCell $running><Sublime /></DockCell>
          <DockCell><Zoom /></DockCell>
          <DockRule $w={58} $top={38} $h={76} />
          <DockCell $running>
            <Discord />
            <DiscordGlyph size={64} />
            <Badge>9</Badge>
          </DockCell>
          <DockCell $running><CloudDesk /></DockCell>
          <DockCell $running><League /></DockCell>
          <DockRule $w={57} $top={20} $h={112} />
          <DockCell><DiskImage /></DockCell>
          <DockCell><EditorShot /></DockCell>
          <DockCell><Trash /></DockCell>
        </Dock>
      </DockArea>
    </Desktop>
  );
}
